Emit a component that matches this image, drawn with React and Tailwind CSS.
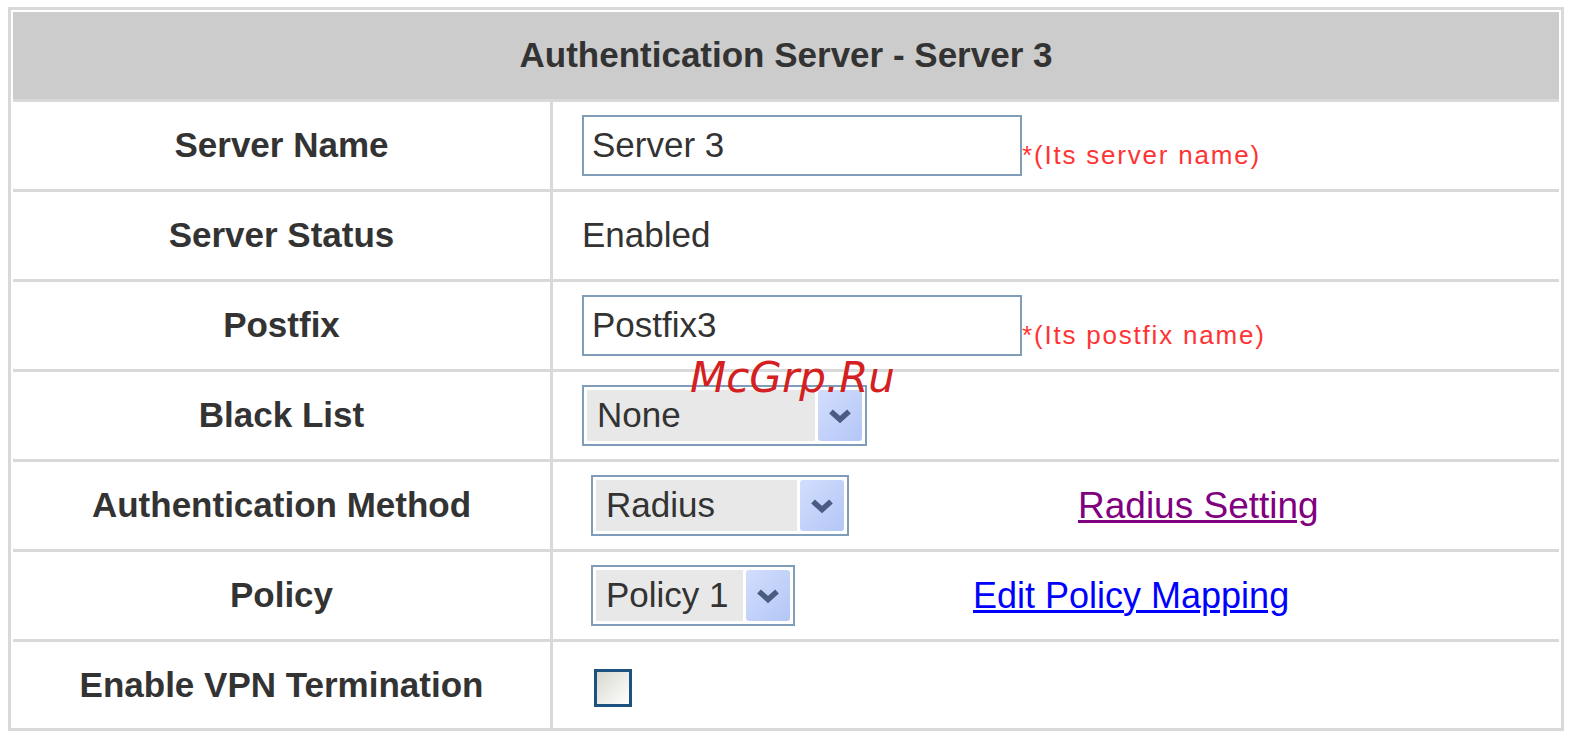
import React from "react";

function Chevron() {
  return (
    <svg width="24" height="16" viewBox="0 0 24 16">
      <path d="M3 3.5 L12 11.5 L21 3.5" fill="none" stroke="#4b5c82" strokeWidth="5.5" />
    </svg>
  );
}

function FakeSelect({ value, width }) {
  return (
    <div
      className="flex h-[61px] border-2 border-[#7f9db9] bg-white p-[3px] gap-[3px]"
      style={{ width }}
    >
      <div className="flex-1 flex items-center bg-[#e8e8e8] pl-[10px] text-[35px] text-[#333]">
        {value}
      </div>
      <div className="w-[44px] rounded-[3px] bg-gradient-to-br from-[#d3defd] to-[#b3c6f6] flex items-center justify-center">
        <Chevron />
      </div>
    </div>
  );
}

function TextBox({ value, hint }) {
  return (
    <div className="flex items-center">
      <div className="w-[440px] h-[61px] border-2 border-[#7f9db9] bg-white flex items-center pl-[8px] text-[35px] text-[#333]">
        {value}
      </div>
      <span className="mt-[20px] text-[26px] tracking-[1.8px] text-[#ff3333]">{hint}</span>
    </div>
  );
}

function Row({ label, children, last }) {
  return (
    <div className={`flex border-t-[3px] border-[#d9d9d9] ${last ? "h-[89px]" : "h-[90px]"}`}>
      <div className="w-[537px] flex items-center justify-center font-bold text-[35px] text-[#333]">
        {label}
      </div>
      <div className="w-[3px] bg-[#d9d9d9]" />
      <div className="flex-1 flex items-center pl-[29px]">{children}</div>
    </div>
  );
}

export default function App() {
  return (
    <div className="relative w-[1576px] h-[748px] bg-white pt-[7px] pl-[8px] font-['Liberation_Sans',Arial,sans-serif]">
      <div className="w-[1556px] border-[3px] border-[#d9d9d9] px-[2px] pt-[2px]">
        <div className="h-[87px] bg-[#cccccc] flex items-center justify-center font-bold text-[35px] text-[#333]">
          Authentication Server - Server 3
        </div>

        <Row label="Server Name">
          <TextBox value="Server 3" hint="*(Its server name)" />
        </Row>

        <Row label="Server Status">
          <span className="text-[35px] text-[#333]">Enabled</span>
        </Row>

        <Row label="Postfix">
          <TextBox value="Postfix3" hint="*(Its postfix name)" />
        </Row>

        <Row label="Black List">
          <FakeSelect value="None" width={285} />
        </Row>

        <Row label="Authentication Method">
          <div className="flex items-center pl-[9px]">
            <FakeSelect value="Radius" width={258} />
            <a href="#" className="ml-[229px] text-[37px] text-[#800080] underline">
              Radius Setting
            </a>
          </div>
        </Row>

        <Row label="Policy">
          <div className="flex items-center pl-[9px]">
            <FakeSelect value="Policy 1" width={204} />
            <a href="#" className="ml-[178px] text-[36px] text-[#0000ff] underline">
              Edit Policy Mapping
            </a>
          </div>
        </Row>

        <Row label="Enable VPN Termination" last>
          <div className="ml-[12px] mt-[6px] w-[38px] h-[38px] border-[3px] border-[#1c5180] bg-gradient-to-br from-[#d8d8d0] to-white" />
        </Row>
      </div>

      <div className="absolute left-[690px] top-[357px] italic text-[42px] leading-none text-[#d42020] font-['DejaVu_Sans',sans-serif]">
        McGrp.Ru
      </div>
    </div>
  );
}
